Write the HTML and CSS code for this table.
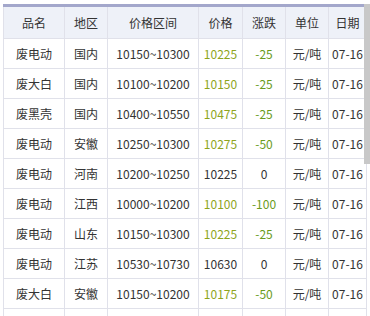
FILE: index.html
```html
<!DOCTYPE html>
<html>
<head>
<meta charset="utf-8">
<link rel="stylesheet" href="styles.css">
</head>
<body>
<div class="wrap">
  <table class="grid">
    <colgroup>
      <col class="c1"><col class="c2"><col class="c3"><col class="c4"><col class="c5"><col class="c6"><col class="c7">
    </colgroup>
    <thead>
      <tr><th>品名</th><th>地区</th><th>价格区间</th><th>价格</th><th>涨跌</th><th>单位</th><th>日期</th></tr>
    </thead>
    <tbody>
      <tr><td>废电动</td><td>国内</td><td>10150~10300</td><td class="up">10225</td><td class="chg">-25</td><td>元/吨</td><td>07-16</td></tr>
      <tr><td>废大白</td><td>国内</td><td>10100~10200</td><td class="up">10150</td><td class="chg">-25</td><td>元/吨</td><td>07-16</td></tr>
      <tr><td>废黑壳</td><td>国内</td><td>10400~10550</td><td class="up">10475</td><td class="chg">-25</td><td>元/吨</td><td>07-16</td></tr>
      <tr><td>废电动</td><td>安徽</td><td>10250~10300</td><td class="up">10275</td><td class="chg">-50</td><td>元/吨</td><td>07-16</td></tr>
      <tr><td>废电动</td><td>河南</td><td>10200~10250</td><td>10225</td><td>0</td><td>元/吨</td><td>07-16</td></tr>
      <tr><td>废电动</td><td>江西</td><td>10000~10200</td><td class="up">10100</td><td class="chg">-100</td><td>元/吨</td><td>07-16</td></tr>
      <tr><td>废电动</td><td>山东</td><td>10150~10300</td><td class="up">10225</td><td class="chg">-25</td><td>元/吨</td><td>07-16</td></tr>
      <tr><td>废电动</td><td>江苏</td><td>10530~10730</td><td>10630</td><td>0</td><td>元/吨</td><td>07-16</td></tr>
      <tr><td>废大白</td><td>安徽</td><td>10150~10200</td><td class="up">10175</td><td class="chg">-50</td><td>元/吨</td><td>07-16</td></tr>
      <tr><td></td><td></td><td></td><td></td><td></td><td></td><td></td></tr>
    </tbody>
  </table>
  <div class="thumb"></div>
</div>
</body>
</html>
```
FILE: styles.css
```css
html, body {
  margin: 0;
  padding: 0;
  background: #fff;
  overflow: hidden;
  height: 316px;
}
.wrap {
  position: relative;
  padding: 4px 0 0 3px;
  height: 312px;
  overflow: hidden;
}
.grid {
  border-collapse: collapse;
  table-layout: fixed;
  width: 363px;
  font-family: "Noto Sans CJK SC", "Liberation Sans", sans-serif;
  font-size: 12px;
  color: #333;
  border-top: 3px solid #a3a7cb;
}
.c1 { width: 61px; }
.c2 { width: 43px; }
.c3 { width: 91px; }
.c4 { width: 44px; }
.c5 { width: 43px; }
.c6 { width: 43px; }
.c7 { width: 38px; }
th, td {
  border: 1px solid #e0e1ea;
  text-align: center;
  padding: 0;
  white-space: nowrap;
  overflow: hidden;
}
th {
  background: #eef1f8;
  font-weight: normal;
  height: 31px;
  border-top: none;
}
td {
  height: 29px;
}
.up { color: #8ea51c; }
.chg { color: #6a9b1c; }
.thumb {
  position: absolute;
  right: 0;
  top: 4px;
  width: 6px;
  height: 160px;
  background: #c8c8c8;
}
```
